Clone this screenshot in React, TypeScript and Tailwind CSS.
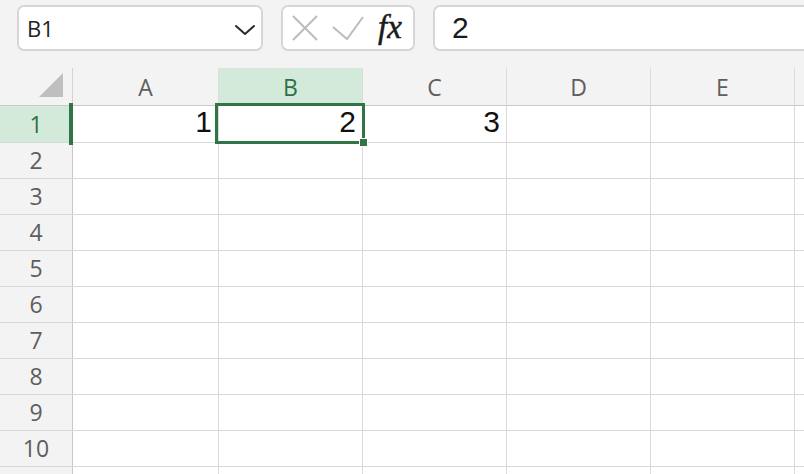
import React from "react";

const cols = ["A", "B", "C", "D", "E"];
const colW = [146, 144, 144, 144, 144];
const rows = [1, 2, 3, 4, 5, 6, 7, 8, 9, 10, 11];

const uiFont = { fontFamily: '"Open Sans", "Noto Sans", sans-serif' };
const cellFont = { fontFamily: '"Liberation Sans", Arial, sans-serif' };

export default function App() {
  const values: Record<string, string> = { A1: "1", B1: "2", C1: "3" };
  return (
    <div className="relative w-[804px] h-[474px] overflow-hidden bg-white">
      {/* top bar */}
      <div className="h-[68px] bg-[#f3f3f3] flex items-start pt-[5px] pl-[17px] gap-[18px]">
        <div className="w-[246px] h-[46px] bg-white border-2 border-[#d6d6d6] rounded-[7px] flex items-center justify-between pl-[8px] pr-[5px]">
          <span className="text-[22px] text-[#222] mt-[1px]" style={uiFont}>B1</span>
          <svg width="22" height="12" viewBox="0 0 22 12" className="mt-[3px]">
            <path d="M2 2 L11 10 L20 2" fill="none" stroke="#2a2a2a" strokeWidth="2" strokeLinecap="round" strokeLinejoin="round" />
          </svg>
        </div>
        <div className="w-[134px] h-[46px] bg-white border-2 border-[#d6d6d6] rounded-[7px] relative">
          <svg width="28" height="28" viewBox="0 0 28 28" className="absolute left-[8px] top-[7px]">
            <path d="M2 2 L26 26 M26 2 L2 26" fill="none" stroke="#bcbcbc" strokeWidth="2" />
          </svg>
          <svg width="34" height="26" viewBox="0 0 34 26" className="absolute left-[48px] top-[8px]">
            <path d="M2 12 L16 24 L32 2" fill="none" stroke="#bcbcbc" strokeWidth="2" />
          </svg>
          <span
            className="absolute left-[95px] top-[0px] text-[33px] italic text-[#1a1a1a] leading-[40px]"
            style={{ fontFamily: '"Liberation Serif", "DejaVu Serif", serif', WebkitTextStroke: "0.5px #1a1a1a" }}
          >
            fx
          </span>
        </div>
        <div className="flex-1 h-[46px] bg-white border-2 border-[#d6d6d6] rounded-l-[7px] border-r-0 flex items-center pl-[17px]">
          <span className="text-[30px] text-[#1a1a1a] leading-none" style={cellFont}>2</span>
        </div>
      </div>

      {/* header row */}
      <div className="flex h-[38px] bg-[#f3f3f3] border-b border-[#c9c9c9]">
        <div className="w-[73px] shrink-0 relative border-r border-[#d4d4d4]">
          <svg width="24" height="24" viewBox="0 0 24 24" className="absolute left-[39px] top-[5px]">
            <path d="M24 0 L24 24 L0 24 Z" fill="#bfbfbf" />
          </svg>
        </div>
        {cols.map((c, i) => (
          <div
            key={c}
            style={{ width: colW[i], ...uiFont }}
            className={
              "shrink-0 border-r border-[#dcdcdc] flex items-center justify-center text-[23px] " +
              (c === "B" ? "bg-[#d3eadb] text-[#2f7046]" : "text-[#5e5e5e]")
            }
          >
            <span className="mt-[1px]">{c}</span>
          </div>
        ))}
        <div className="flex-1" />
      </div>

      {/* body rows */}
      {rows.map((r) => (
        <div key={r} className={"flex border-b border-[#d9d9d9] " + (r === 1 ? "h-[37px]" : "h-[36px]")}>
          <div
            style={uiFont}
            className={
              "w-[73px] shrink-0 border-r border-[#c9c9c9] flex items-center justify-center text-[23px] " +
              (r === 1 ? "bg-[#d3eadb] text-[#2f7046]" : "bg-[#f3f3f3] text-[#5e5e5e]")
            }
          >
            {r <= 10 ? r : ""}
          </div>
          {cols.map((c, i) => (
            <div
              key={c}
              style={{ width: colW[i] }}
              className="shrink-0 border-r border-[#d9d9d9] flex items-end justify-end pr-[6px]"
            >
              {values[c + r] && (
                <span className="text-[30px] text-[#111] leading-none mb-[5px]" style={cellFont}>
                  {values[c + r]}
                </span>
              )}
            </div>
          ))}
          <div className="flex-1" />
        </div>
      ))}

      {/* selection overlays */}
      <div className="absolute left-[69px] top-[103px] w-[4px] h-[42px] bg-[#317547]" />
      <div className="absolute left-[215px] top-[103px] w-[150px] h-[41px] border-[3px] border-[#317547]" />
      <div className="absolute left-[359px] top-[138px] w-[9px] h-[9px] bg-[#317547] border border-white" />
    </div>
  );
}
